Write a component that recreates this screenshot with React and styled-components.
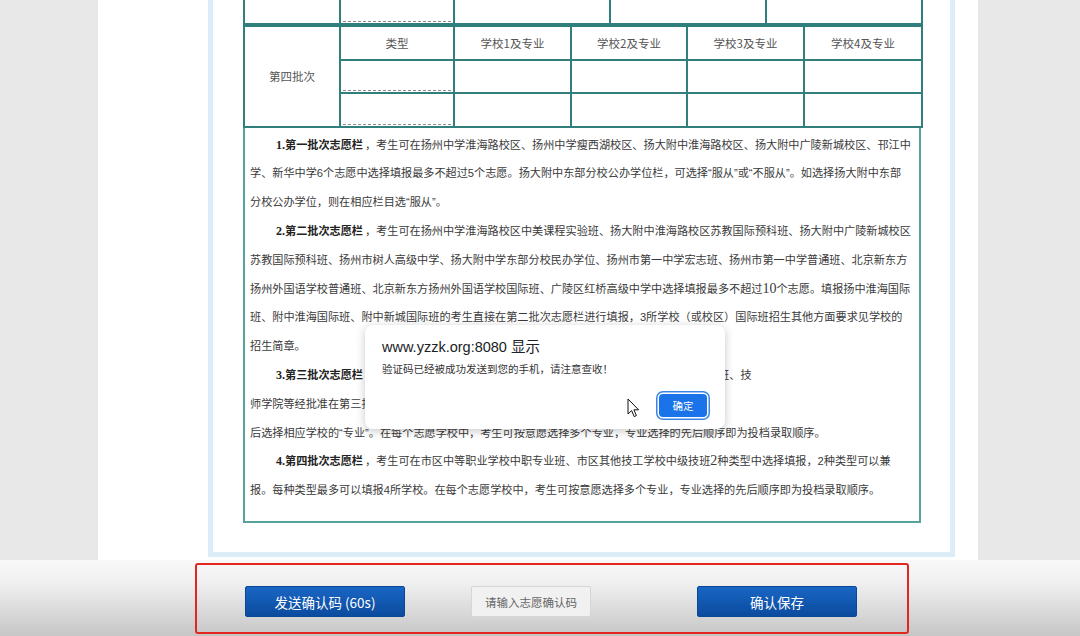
import React from "react";
import styled, { createGlobalStyle } from "styled-components";

const GlobalStyle = createGlobalStyle`
  html, body {
    margin: 0;
    padding: 0;
  }
  body {
    width: 1080px;
    height: 636px;
    overflow: hidden;
    background: #e8e8e8;
    font-family: "Noto Sans CJK SC", "Noto Sans", sans-serif;
    color: #333;
  }
`;

const Screen = styled.div`
  position: relative;
  width: 1080px;
  height: 636px;
  display: flex;
  flex-direction: column;
  overflow: hidden;
`;

const Body = styled.div`
  height: 560px;
  display: flex;
  flex-shrink: 0;
`;

const Gutter = styled.div`
  width: ${(p) => p.$w}px;
  flex-shrink: 0;
  background: #e8e8e8;
`;

const Page = styled.div`
  width: 880px;
  flex-shrink: 0;
  box-sizing: border-box;
  background: #fff;
  padding: 0 23px 3px 110px;
  display: flex;
  flex-direction: column;
`;

const Panel = styled.div`
  flex: 1;
  border: 5px solid #dcedf8;
  border-top: none;
  padding: 0 29px 29px 30px;
  display: flex;
  flex-direction: column;
  justify-content: flex-end;
  overflow: hidden;
`;

const Grid = styled.table`
  width: 678px;
  border-collapse: collapse;
  table-layout: fixed;
`;

const Cell = styled.td`
  border: 2px solid #317f7c;
  border-top: ${(p) => (p.$open ? "none" : "2px solid #317f7c")};
  height: ${(p) => p.$h}px;
  padding: 0;
  text-align: center;
  vertical-align: bottom;
  font-size: 11.5px;
  color: #555;
`;

const HeadCell = styled(Cell)`
  vertical-align: middle;
`;

const Slot = styled.div`
  height: ${(p) => p.$h}px;
  margin: 0 2px 1px;
  border-bottom: 1px dashed #8c8c8c;
`;

const Notes = styled.div`
  width: 678px;
  box-sizing: border-box;
  border: 2px solid #56a29c;
  border-top: none;
  padding: 3px 4px 16px 5px;
  font-family: "Liberation Sans", "Noto Sans CJK SC", sans-serif;
  font-size: 11.15px;
  line-height: 28.8px;
  color: #3a3a3a;
`;

const Line = styled.div`
  height: 28.8px;
  white-space: nowrap;
  padding-left: ${(p) => (p.$indent ? 26 : 0)}px;
`;

const Lead = styled.b`
  font-weight: 700;
  color: #222;
  margin-right: 2px;
`;

const Num = styled.span`
  font-family: "Liberation Serif", serif;
  font-size: ${(p) => (p.$big ? 14 : 12)}px;
  line-height: 1;
`;

const Footer = styled.div`
  flex: 1;
  background: linear-gradient(to bottom, #f9f9f9 0%, #f0f0f0 30%, #c6c6c6 100%);
  padding: 3px 0 0 195px;
`;

const Highlight = styled.div`
  width: 714px;
  height: 71px;
  box-sizing: border-box;
  border: 2px solid #e3261f;
  border-radius: 3px;
  display: flex;
  align-items: flex-start;
  padding: 21px 0 0 48px;
`;

const Action = styled.button`
  width: 160px;
  height: 31px;
  margin-right: ${(p) => p.$gap || 0}px;
  border: 1px solid #0a4797;
  border-radius: 2px;
  background: linear-gradient(#1966c4, #0b4b9e);
  color: #fff;
  font-family: "Noto Sans CJK SC", sans-serif;
  font-size: 13.5px;
  padding: 0;
`;

const CodeInput = styled.input`
  width: 120px;
  height: 31px;
  box-sizing: border-box;
  margin-right: 106px;
  border: 1px solid #d6d6d6;
  border-radius: 2px;
  background: #f1f1f1;
  text-align: center;
  font-family: "Noto Sans CJK SC", sans-serif;
  font-size: 11.5px;
  &::placeholder {
    color: #666;
  }
`;

const Dialog = styled.div`
  position: absolute;
  left: 365px;
  top: 325px;
  width: 360px;
  height: 104px;
  box-sizing: border-box;
  background: #fff;
  border-radius: 8px;
  box-shadow: 0 2px 10px rgba(0, 0, 0, 0.22);
  padding: 12px 15px 12px 17px;
  display: flex;
  flex-direction: column;
`;

const DialogTitle = styled.div`
  font-family: "Liberation Sans", "Noto Sans CJK SC", sans-serif;
  font-size: 14.5px;
  line-height: 20px;
  color: #202124;
`;

const DialogText = styled.div`
  margin-top: 4px;
  font-size: 10.5px;
  line-height: 16px;
  color: #333;
`;

const DialogActions = styled.div`
  margin-top: auto;
  display: flex;
  justify-content: flex-end;
  padding-right: 3px;
`;

const OkButton = styled.button`
  width: 48px;
  height: 23px;
  border: none;
  border-radius: 4px;
  background: #1a73e8;
  color: #fff;
  font-family: "Noto Sans CJK SC", sans-serif;
  font-size: 10.5px;
  padding: 0;
  box-shadow: 0 0 0 1.5px #fff, 0 0 0 3px #3a84e6;
`;

const Pointer = styled.svg`
  position: absolute;
  left: 627px;
  top: 398px;
`;

const schools = ["学校1及专业", "学校2及专业", "学校3及专业", "学校4及专业"];

export default function App() {
  return (
    <Screen>
      <GlobalStyle />
      <Body>
        <Gutter $w={98} />
        <Page>
          <Panel>
            <Grid>
              <colgroup>
                <col style={{ width: 96 }} />
                <col style={{ width: 114 }} />
                <col style={{ width: 156 }} />
                <col style={{ width: 156 }} />
                <col style={{ width: 156 }} />
              </colgroup>
              <tbody>
                <tr>
                  <Cell $open $h={24} />
                  <Cell $open $h={24}>
                    <Slot $h={20} />
                  </Cell>
                  <Cell $open $h={24} />
                  <Cell $open $h={24} />
                  <Cell $open $h={24} />
                </tr>
              </tbody>
            </Grid>
            <Grid>
              <colgroup>
                <col style={{ width: 96 }} />
                <col style={{ width: 114 }} />
                <col style={{ width: 117 }} />
                <col style={{ width: 116 }} />
                <col style={{ width: 117 }} />
                <col style={{ width: 118 }} />
              </colgroup>
              <tbody>
                <tr>
                  <HeadCell rowSpan={3} $h={32}>第四批次</HeadCell>
                  <HeadCell $h={32}>类型</HeadCell>
                  {schools.map((s) => (
                    <HeadCell key={s} $h={32}>{s}</HeadCell>
                  ))}
                </tr>
                {[31, 32].map((h, r) => (
                  <tr key={r}>
                    <Cell $h={h}>
                      <Slot $h={h - 4} />
                    </Cell>
                    {schools.map((s) => (
                      <Cell key={s} $h={h} />
                    ))}
                  </tr>
                ))}
              </tbody>
            </Grid>
            <Notes>
              <Line $indent>
                <Lead><Num>1.</Num>第一批次志愿栏</Lead>，考生可在扬州中学淮海路校区、扬州中学瘦西湖校区、扬大附中淮海路校区、扬大附中广陵新城校区、邗江中
              </Line>
              <Line>学、新华中学6个志愿中选择填报最多不超过5个志愿。扬大附中东部分校公办学位栏，可选择“服从”或“不服从”。如选择扬大附中东部</Line>
              <Line>分校公办学位，则在相应栏目选“服从”。</Line>
              <Line $indent>
                <Lead><Num>2.</Num>第二批次志愿栏</Lead>，考生可在扬州中学淮海路校区中美课程实验班、扬大附中淮海路校区苏教国际预科班、扬大附中广陵新城校区
              </Line>
              <Line>苏教国际预科班、扬州市树人高级中学、扬大附中学东部分校民办学位、扬州市第一中学宏志班、扬州市第一中学普通班、北京新东方</Line>
              <Line>
                扬州外国语学校普通班、北京新东方扬州外国语学校国际班、广陵区红桥高级中学中选择填报最多不超过<Num $big>10</Num>个志愿。填报扬中淮海国际
              </Line>
              <Line>班、附中淮海国际班、附中新城国际班的考生直接在第二批次志愿栏进行填报，3所学校（或校区）国际班招生其他方面要求见学校的</Line>
              <Line>招生简章。</Line>
              <Line $indent>
                <Lead><Num>3.</Num>第三批次志愿栏</Lead>，考生可在市区中等职业学校3+3中高职分段培养专业班、五年高职专业班、技
              </Line>
              <Line>师学院等经批准在第三批次招生的学校中选择填报，先选择“类型”，再选择该类型中“学校”，然</Line>
              <Line>后选择相应学校的“专业”。在每个志愿学校中，考生可按意愿选择多个专业，专业选择的先后顺序即为投档录取顺序。</Line>
              <Line $indent>
                <Lead><Num>4.</Num>第四批次志愿栏</Lead>，考生可在市区中等职业学校中职专业班、市区其他技工学校中级技班<Num $big>2</Num>种类型中选择填报，2种类型可以兼
              </Line>
              <Line>报。每种类型最多可以填报4所学校。在每个志愿学校中，考生可按意愿选择多个专业，专业选择的先后顺序即为投档录取顺序。</Line>
            </Notes>
          </Panel>
        </Page>
        <Gutter $w={102} />
      </Body>
      <Footer>
        <Highlight>
          <Action $gap={66}>发送确认码 (60s)</Action>
          <CodeInput placeholder="请输入志愿确认码" />
          <Action>确认保存</Action>
        </Highlight>
      </Footer>

      <Dialog>
        <DialogTitle>www.yzzk.org:8080 显示</DialogTitle>
        <DialogText>验证码已经被成功发送到您的手机，请注意查收！</DialogText>
        <DialogActions>
          <OkButton>确定</OkButton>
        </DialogActions>
      </Dialog>

      <Pointer width="13" height="20" viewBox="0 0 13 20">
        <path
          d="M1 1 L1 16 L4.6 12.6 L7.2 18.6 L9.4 17.6 L6.9 11.8 L11.6 11.8 Z"
          fill="#fff"
          stroke="#111"
          strokeWidth="1"
          strokeLinejoin="round"
        />
      </Pointer>
    </Screen>
  );
}
